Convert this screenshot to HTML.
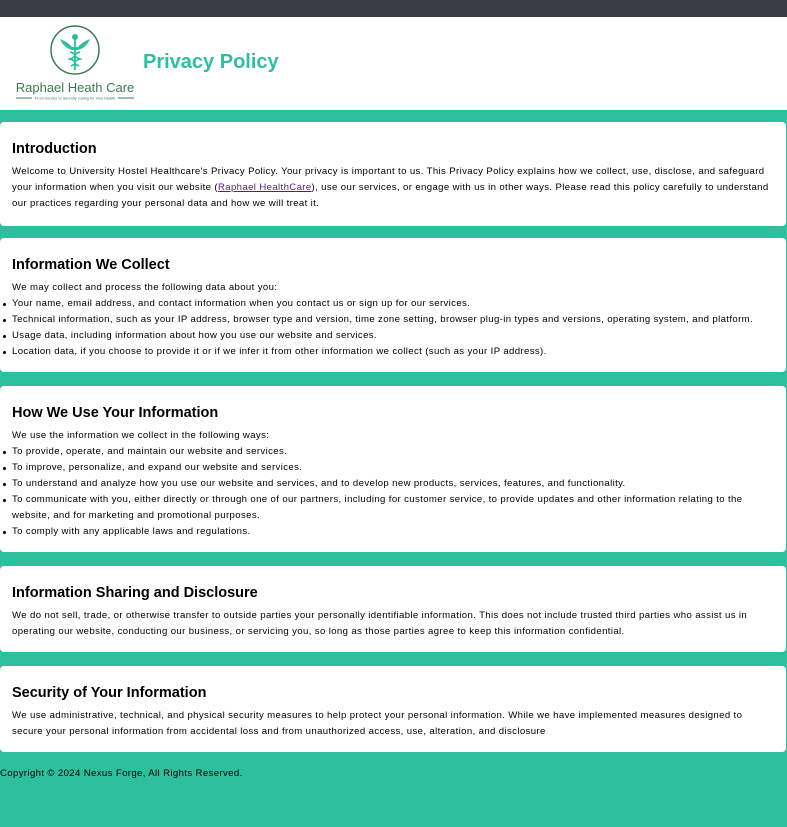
<!DOCTYPE html>
<html><head><meta charset="utf-8"><style>
body{margin:0;width:787px;height:827px;background:#2ebf9f;font-family:"Liberation Sans",sans-serif;color:#000;position:relative;overflow:hidden}
.top{position:absolute;left:0;top:0;width:787px;height:17px;background:#393c45}
.hdr{position:absolute;left:0;top:17px;width:787px;height:93px;background:#fff}
.card{position:absolute;left:0;width:786px;background:#fff;border-radius:4px;box-sizing:border-box;padding:17px 12px 0 12px}
h2{margin:0;font-size:14.5px;line-height:20px;font-weight:bold}
p,li{font-size:9.6px;line-height:16px;letter-spacing:0.37px;margin:0}
.card p.first{margin-top:5px}
ul{margin:0;padding-left:0}
li{list-style:none;position:relative}
li:before{content:"";position:absolute;left:-9px;top:7px;width:3px;height:3px;border-radius:50%;background:#000}
a{color:#551a8b}
.foot{position:absolute;left:0;top:766px;font-size:9.6px;line-height:16px;letter-spacing:0.37px}
</style></head><body>
<div class="top"></div>
<div class="hdr">
<svg width="140" height="90" style="position:absolute;left:8px;top:5px">
<circle cx="67" cy="28" r="24" fill="none" stroke="#3b7a57" stroke-width="1.5"/>
<path d="M52 17 Q60 20 64 25 L70 25 Q74 20 82 17 Q78 26 70 28 L64 28 Q56 26 52 17Z" fill="#2ebf9f"/>
<circle cx="67" cy="15" r="3" fill="#2ebf9f"/>
<path d="M67 17 V48 M62 30 Q72 33 62 37 Q72 40 63 44 M72 30 Q62 33 72 37 Q62 40 71 44" stroke="#2ebf9f" stroke-width="1.8" fill="none"/>
<text x="67" y="70" text-anchor="middle" font-family="Liberation Sans" font-size="13" fill="#3b7a57">Raphael Heath Care</text>
<line x1="8" y1="76" x2="24" y2="76" stroke="#3b7a57"/><line x1="110" y1="76" x2="126" y2="76" stroke="#3b7a57"/>
<text x="67" y="77.5" text-anchor="middle" font-family="Liberation Sans" font-size="3.8" fill="#3b7a57">From Service to Serenity Caring for Your Health</text>
</svg>
<div style="position:absolute;left:143px;top:34px;font-size:20px;font-weight:bold;color:#2ebf9f">Privacy Policy</div>
</div>

<div class="card" style="top:122px;height:104px">
<h2>Introduction</h2>
<p class="first">Welcome to University Hostel Healthcare's Privacy Policy. Your privacy is important to us. This Privacy Policy explains how we collect, use, disclose, and safeguard your information when you visit our website (<a href="#">Raphael HealthCare</a>), use our services, or engage with us in other ways. Please read this policy carefully to understand our practices regarding your personal data and how we will treat it.</p>
</div>

<div class="card" style="top:238px;height:134px">
<h2>Information We Collect</h2>
<p class="first">We may collect and process the following data about you:</p>
<ul>
<li>Your name, email address, and contact information when you contact us or sign up for our services.</li>
<li>Technical information, such as your IP address, browser type and version, time zone setting, browser plug-in types and versions, operating system, and platform.</li>
<li>Usage data, including information about how you use our website and services.</li>
<li>Location data, if you choose to provide it or if we infer it from other information we collect (such as your IP address).</li>
</ul>
</div>

<div class="card" style="top:386px;height:166px">
<h2>How We Use Your Information</h2>
<p class="first">We use the information we collect in the following ways:</p>
<ul>
<li>To provide, operate, and maintain our website and services.</li>
<li>To improve, personalize, and expand our website and services.</li>
<li>To understand and analyze how you use our website and services, and to develop new products, services, features, and functionality.</li>
<li>To communicate with you, either directly or through one of our partners, including for customer service, to provide updates and other information relating to the website, and for marketing and promotional purposes.</li>
<li>To comply with any applicable laws and regulations.</li>
</ul>
</div>

<div class="card" style="top:566px;height:86px">
<h2>Information Sharing and Disclosure</h2>
<p class="first">We do not sell, trade, or otherwise transfer to outside parties your personally identifiable information. This does not include trusted third parties who assist us in operating our website, conducting our business, or servicing you, so long as those parties agree to keep this information confidential.</p>
</div>

<div class="card" style="top:666px;height:86px">
<h2>Security of Your Information</h2>
<p class="first">We use administrative, technical, and physical security measures to help protect your personal information. While we have implemented measures designed to secure your personal information from accidental loss and from unauthorized access, use, alteration, and disclosure</p>
</div>

<div class="foot">Copyright © 2024 Nexus Forge, All Rights Reserved.</div>
</body></html>
